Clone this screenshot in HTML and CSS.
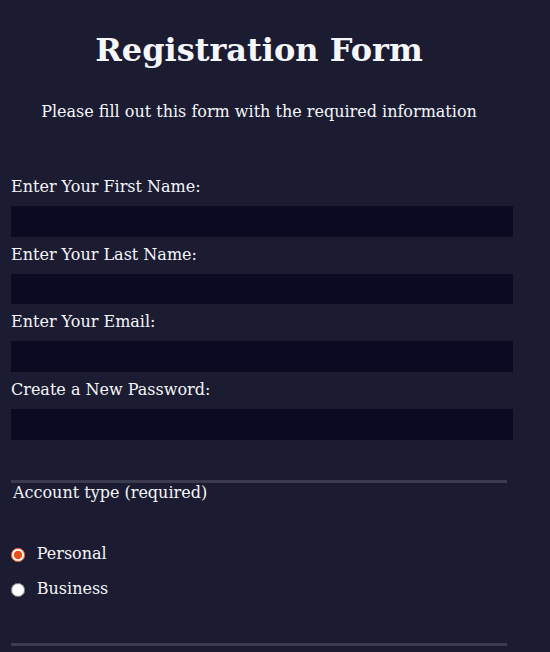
FILE: index.html
```html
<!DOCTYPE html>
<html lang="en">
<head>
<meta charset="utf-8">
<title>Registration Form</title>
<link rel="stylesheet" href="styles.css">
</head>
<body>
<main class="page">
  <header class="intro">
    <h1 class="title">Registration Form</h1>
    <p class="subtitle">Please fill out this form with the required information</p>
  </header>
  <form class="form" action="#">
    <fieldset class="group">
      <label class="field">Enter Your First Name: <input class="text-input" type="text"></label>
      <label class="field">Enter Your Last Name: <input class="text-input" type="text"></label>
      <label class="field">Enter Your Email: <input class="text-input" type="email"></label>
      <label class="field">Create a New Password: <input class="text-input" type="password"></label>
    </fieldset>
    <fieldset class="group">
      <legend class="legend">Account type (required)</legend>
      <label class="field choice"><input class="radio" type="radio" name="account-type" checked> Personal</label>
      <label class="field choice"><input class="radio" type="radio" name="account-type"> Business</label>
    </fieldset>
  </form>
</main>
</body>
</html>
```
FILE: styles.css
```css
html, body {
  margin: 0;
  overflow: hidden;
}
body {
  background-color: #1b1b32;
  color: #f5f6f7;
  font-family: "DejaVu Serif", serif;
  font-size: 16px;
}
.page {
  width: 500px;
  margin-left: 9px;
  padding-top: 31px;
}
.intro {
  text-align: center;
}
.title {
  font-size: 32px;
  font-weight: bold;
  margin: 0 0 33px;
}
.subtitle {
  margin: 0 0 16px;
}
.group {
  margin: 0 2px;
  padding: 32px 0;
  border: none;
  border-bottom: 3px solid #3b3b4f;
  min-width: 0;
}
.legend {
  padding: 0 2px;
}
.field {
  display: block;
  margin: 8px 0;
}
.text-input {
  display: block;
  width: 100%;
  margin: 10px 0 0 0;
  min-height: 2em;
  background-color: #0a0a23;
  border: 1px solid #0a0a23;
  color: #ffffff;
}
.choice {
  min-height: 27px;
  line-height: 23px;
}
.choice:last-child {
  min-height: 26px;
}
.radio {
  width: 14px;
  height: 14px;
  margin: 0 0.5em 0 0;
  vertical-align: -3px;
  accent-color: #e8501c;
}
```
